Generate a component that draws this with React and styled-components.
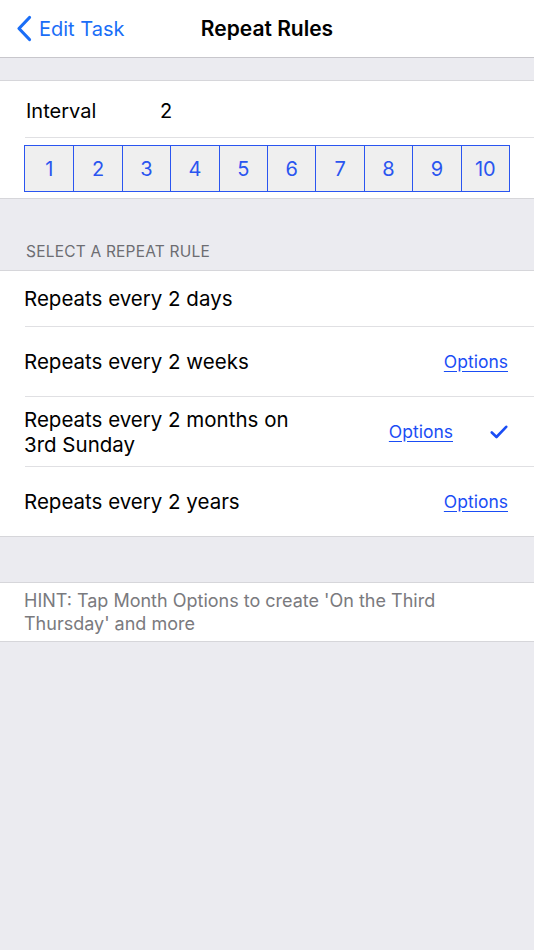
import React from "react";
import styled, { createGlobalStyle } from "styled-components";

const Global = createGlobalStyle`
  html, body { margin: 0; padding: 0; background: #ebebf0; }
  body { font-family: Inter, "Noto Sans", "Liberation Sans", sans-serif; -webkit-font-smoothing: antialiased; }
  * { box-sizing: border-box; }
`;

const Page = styled.div`
  width: 534px;
  min-height: 950px;
  background: #ebebf0;
  display: flex;
  flex-direction: column;
`;

const NavBar = styled.header`
  height: 58px;
  background: #fff;
  border-bottom: 1px solid #c8c7cc;
  display: grid;
  grid-template-columns: 1fr auto 1fr;
  align-items: center;
  padding: 0 16px;
`;

const Back = styled.div`
  display: flex;
  align-items: center;
  gap: 7px;
  color: #1a6ef7;
  font-size: 20px;
`;

const Title = styled.div`
  font-size: 21px;
  font-weight: 600;
  color: #000;
  padding-bottom: 1px;
`;

const Spacer = styled.div`
  height: ${(p) => p.h}px;
`;

const Section = styled.section`
  background: #fff;
  border-top: 1px solid #d6d6da;
  border-bottom: 1px solid #d6d6da;
`;

const IntervalRow = styled.div`
  height: 56px;
  display: flex;
  align-items: center;
  padding-left: 26px;
  font-size: 20px;
  color: #000;
  padding-top: 3px;
`;

const IntervalLabel = styled.span`
  width: 134px;
`;

const Separator = styled.div`
  height: 1px;
  background: #e0e0e3;
  margin-left: ${(p) => p.inset ?? 25}px;
`;

const NumberBar = styled.div`
  display: grid;
  grid-template-columns: repeat(10, 1fr);
  margin: 7px 24px 6px 24px;
  border: 1px solid #2a55f0;
  height: 47px;
`;

const NumberCell = styled.div`
  background: #efefef;
  border-left: ${(p) => (p.first ? "none" : "1px solid #2a55f0")};
  display: flex;
  align-items: center;
  justify-content: center;
  color: #2a55f0;
  font-size: 20px;
`;

const SectionHeader = styled.div`
  height: 71px;
  display: flex;
  align-items: flex-end;
  padding: 0 0 9px 26px;
  font-size: 15.5px;
  color: #6d6d72;
  letter-spacing: 0.2px;
`;

const RuleRow = styled.div`
  height: ${(p) => p.h}px;
  display: flex;
  align-items: center;
  padding: 0 26px 0 24px;
  font-size: 20.5px;
  color: #000;
  line-height: 25px;
`;

const RuleText = styled.div`
  flex: 1;
  max-width: 290px;
`;

const Trailing = styled.div`
  margin-left: auto;
  display: flex;
  align-items: center;
  gap: 37px;
`;

const OptionsLink = styled.a`
  color: #1a4df5;
  font-size: 17.5px;
  text-decoration: underline;
  text-underline-offset: 3px;
  cursor: pointer;
`;

const Hint = styled.div`
  padding: 6px 24px 6px 24px;
  font-size: 18px;
  line-height: 23px;
  color: #7a7a7e;
`;

const Chevron = () => (
  <svg width="16" height="27" viewBox="0 0 16 27">
    <path d="M13.5 2.5 L3 13.5 L13.5 24.5" fill="none" stroke="#1a6ef7" strokeWidth="3.2" strokeLinecap="round" strokeLinejoin="round" />
  </svg>
);

const Check = () => (
  <svg width="18" height="14" viewBox="0 0 18 14">
    <path d="M1.8 7.5 L6.5 12 L16.2 1.8" fill="none" stroke="#1a4df5" strokeWidth="2.6" strokeLinecap="round" strokeLinejoin="round" />
  </svg>
);

const rules = [
  { text: "Repeats every 2 days", h: 55 },
  { text: "Repeats every 2 weeks", h: 69, options: true },
  { text: "Repeats every 2 months on 3rd Sunday", h: 69, options: true, checked: true },
  { text: "Repeats every 2 years", h: 69, options: true },
];

export default function App() {
  return (
    <Page>
      <Global />
      <NavBar>
        <Back>
          <Chevron />
          <span>Edit Task</span>
        </Back>
        <Title>Repeat Rules</Title>
        <div />
      </NavBar>
      <Spacer h={22} />
      <Section>
        <IntervalRow>
          <IntervalLabel>Interval</IntervalLabel>
          <span>2</span>
        </IntervalRow>
        <Separator />
        <NumberBar>
          {Array.from({ length: 10 }, (_, i) => (
            <NumberCell key={i} first={i === 0}>
              {i + 1}
            </NumberCell>
          ))}
        </NumberBar>
      </Section>
      <SectionHeader>SELECT A REPEAT RULE</SectionHeader>
      <Section>
        {rules.map((r, i) => (
          <React.Fragment key={r.text}>
            {i > 0 && <Separator />}
            <RuleRow h={r.h}>
              <RuleText>{r.text}</RuleText>
              {r.options && (
                <Trailing>
                  <OptionsLink>Options</OptionsLink>
                  {r.checked && <Check />}
                </Trailing>
              )}
            </RuleRow>
          </React.Fragment>
        ))}
      </Section>
      <Spacer h={45} />
      <Section>
        <Hint>HINT: Tap Month Options to create 'On the Third Thursday' and more</Hint>
      </Section>
    </Page>
  );
}
